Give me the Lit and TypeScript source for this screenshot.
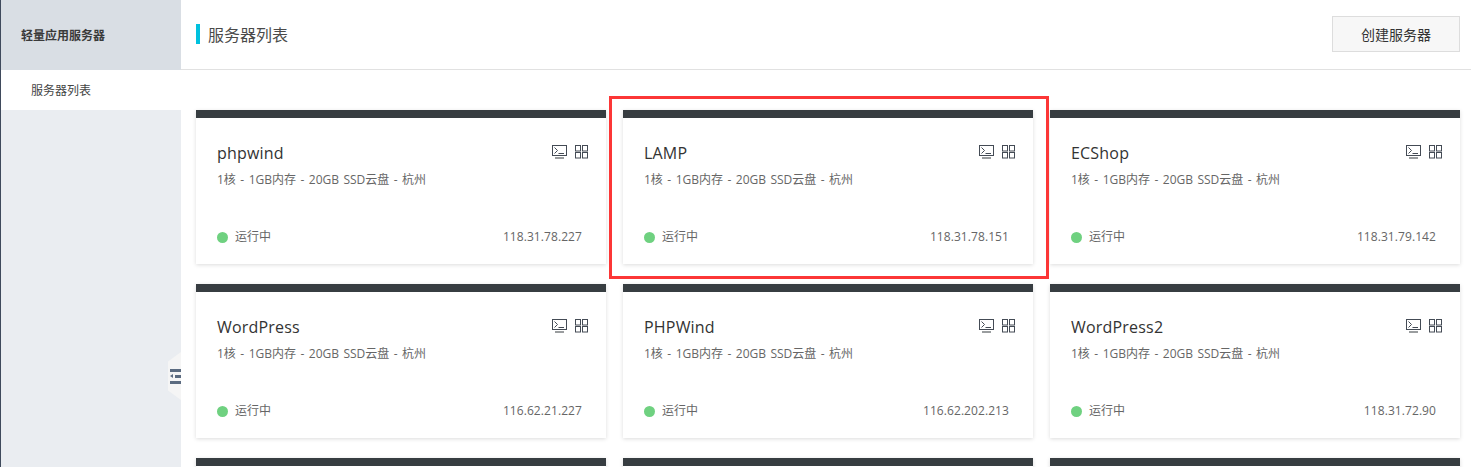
import { LitElement, html, css, svg } from "lit";
import { customElement } from "lit/decorators.js";

const servers = [
  { name: "phpwind", ip: "118.31.78.227" },
  { name: "LAMP", ip: "118.31.78.151" },
  { name: "ECShop", ip: "118.31.79.142" },
  { name: "WordPress", ip: "116.62.21.227" },
  { name: "PHPWind", ip: "116.62.202.213" },
  { name: "WordPress2", ip: "118.31.72.90" },
  { name: "", ip: "" },
  { name: "", ip: "" },
  { name: "", ip: "" },
];

const terminal = svg`<svg width="15" height="14" viewBox="0 0 15 14" fill="none" stroke="#444b55" stroke-width="1">
  <rect x="0.5" y="0.5" width="14" height="10"/>
  <path d="M2.5 2.5l3 3-3 3M6.5 8.5h5.5"/>
  <path d="M3 13h9" stroke="#9a9d9f" stroke-width="2"/>
</svg>`;

const grid = svg`<svg width="13" height="14" viewBox="0 0 13 14" fill="none" stroke="#444b55" stroke-width="1">
  <rect x="0.5" y="0.5" width="5" height="5.5"/>
  <rect x="7.5" y="0.5" width="5" height="5.5"/>
  <rect x="0.5" y="7.5" width="5" height="5.5"/>
  <rect x="7.5" y="7.5" width="5" height="5.5"/>
</svg>`;

@customElement("app-root")
export class AppRoot extends LitElement {
  static styles = css`
    :host {
      display: block;
      width: 1471px;
      height: 467px;
      overflow: hidden;
      position: relative;
      background: #fff;
      font-family: "Open Sans", "Noto Sans CJK SC", sans-serif;
      color: #333;
    }
    .layout {
      display: grid;
      grid-template-columns: 181px 1fr;
      height: 467px;
    }
    .sidebar {
      background: #eaedf1;
      border-left: 1px solid #3f4a5c;
      display: flex;
      flex-direction: column;
      position: relative;
    }
    .side-title {
      height: 70px;
      box-sizing: border-box;
      background: #d9dee4;
      padding-left: 20px;
      display: flex;
      align-items: center;
      font-size: 12px;
      font-weight: 700;
      color: #3a3a3a;
    }
    .side-item {
      height: 40px;
      background: #fff;
      padding-left: 30px;
      display: flex;
      align-items: center;
      font-size: 12px;
      color: #444;
    }
    .handle {
      position: absolute;
      right: 0;
      top: 352px;
      width: 13px;
      height: 48px;
      background: #f5f5f5;
      clip-path: polygon(100% 0, 100% 100%, 0 80%, 0 20%);
      display: flex;
      flex-direction: column;
      justify-content: center;
      gap: 3px;
      align-items: flex-end;
    }
    .handle i {
      display: block;
      height: 3px;
      background: #5b6b80;
      width: 11px;
    }
    .handle i.mid {
      width: 6px;
      position: relative;
    }
    .handle i.mid::before {
      content: "";
      position: absolute;
      left: -5px;
      top: -1px;
      border: 2.5px solid transparent;
      border-left: 0;
      border-right: 3px solid #5b6b80;
    }
    .main {
      display: flex;
      flex-direction: column;
      min-width: 0;
    }
    .head {
      height: 70px;
      box-sizing: border-box;
      border-bottom: 1px solid #e1e1e1;
      padding: 0 11px 1px 15px;
      display: flex;
      align-items: center;
      justify-content: space-between;
    }
    .title {
      display: flex;
      align-items: center;
      gap: 8px;
      font-size: 16px;
      color: #4a4a4a;
    }
    .title::before {
      content: "";
      width: 4px;
      height: 20px;
      background: #00c1de;
    }
    .create {
      width: 128px;
      height: 36px;
      box-sizing: border-box;
      border: 1px solid #ddd;
      background: #f7f7f7;
      display: flex;
      align-items: center;
      justify-content: center;
      font-size: 14px;
      color: #333;
    }
    .cards {
      display: grid;
      grid-template-columns: repeat(3, 410px);
      column-gap: 17px;
      row-gap: 20px;
      padding: 40px 0 0 15px;
    }
    .card {
      height: 154px;
      box-sizing: border-box;
      border-top: 8px solid #373d41;
      background: #fff;
      box-shadow: 0 1px 4px rgba(0, 0, 0, 0.14);
      padding: 24px 18px 0 21px;
      display: flex;
      flex-direction: column;
    }
    .row1 {
      display: flex;
      justify-content: space-between;
      align-items: flex-start;
      height: 30px;
    }
    .name {
      font-size: 16px;
      line-height: 22px;
      color: #333;
      letter-spacing: 0.2px;
    }
    .icons {
      display: flex;
      gap: 8px;
      align-items: flex-start;
      padding-top: 3px;
    }
    .specs {
      font-size: 12px;
      line-height: 16px;
      color: #666;
      word-spacing: 1.35px;
    }
    .row3 {
      margin-top: 39px;
      padding-right: 6px;
      display: flex;
      justify-content: space-between;
      align-items: center;
      font-size: 12px;
      line-height: 20px;
      color: #666;
    }
    .ip {
      letter-spacing: 0.08px;
    }
    .status {
      display: flex;
      align-items: center;
      gap: 7px;
    }
    .dot {
      width: 11px;
      height: 11px;
      border-radius: 50%;
      background: #6fd180;
    }
    .highlight {
      position: absolute;
      left: 609px;
      top: 96px;
      width: 440px;
      height: 183px;
      box-sizing: border-box;
      border: 3px solid #fc3636;
      pointer-events: none;
    }
  `;

  private card(s: { name: string; ip: string }) {
    if (!s.name) return html`<div class="card"></div>`;
    return html`<div class="card">
      <div class="row1">
        <div class="name">${s.name}</div>
        <div class="icons">${terminal}${grid}</div>
      </div>
      <div class="specs">1核 - 1GB内存 - 20GB SSD云盘 - 杭州</div>
      <div class="row3">
        <div class="status"><span class="dot"></span>运行中</div>
        <div class="ip">${s.ip}</div>
      </div>
    </div>`;
  }

  render() {
    return html`<div class="layout">
        <aside class="sidebar">
          <div class="side-title">轻量应用服务器</div>
          <div class="side-item">服务器列表</div>
          <div class="handle"><i></i><i class="mid"></i><i></i></div>
        </aside>
        <main class="main">
          <header class="head">
            <div class="title">服务器列表</div>
            <div class="create">创建服务器</div>
          </header>
          <div class="cards">${servers.map((s) => this.card(s))}</div>
        </main>
      </div>
      <div class="highlight"></div>`;
  }
}
